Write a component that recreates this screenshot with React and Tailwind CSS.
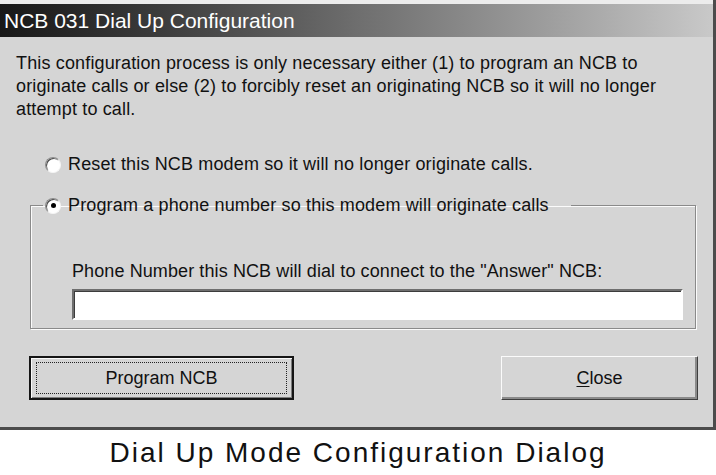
import React from 'react';

const Radio = ({ checked }) => (
  <span className="relative flex h-[16px] w-[16px] shrink-0 items-center justify-center rounded-full border border-t-[#8c8c8c] border-l-[#8c8c8c] border-r-[#f6f6f6] border-b-[#f6f6f6] bg-white shadow-[inset_1px_1px_0_#4a4a4a]">
    {checked && <span className="h-[5px] w-[5px] rounded-full bg-black" />}
  </span>
);

const App = () => {
  return (
    <div className="flex h-[475px] w-[716px] flex-col bg-white font-['Liberation_Sans',Arial,sans-serif] text-[#111]">
      {/* Dialog window */}
      <div className="flex h-[430px] w-full flex-col border-r-[3px] border-b-[3px] border-[#4c4c4c] bg-[#d5d5d5]">
        <div className="h-[4px] bg-[#ececec]" />
        <div className="flex h-[33px] items-center bg-linear-to-r from-[#181818] via-[#6e6e6e] to-[#c9c9c9] pl-[4px] text-[21px] text-white">
          NCB 031 Dial Up Configuration
        </div>

        <p className="mt-[15px] pl-[16px] text-[18px] leading-[23px] tracking-[0.15px]">
          This configuration process is only necessary either (1) to program an NCB to
          <br />
          originate calls or else (2) to forcibly reset an originating NCB so it will no longer
          <br />
          attempt to call.
        </p>

        <label className="mt-[32px] flex h-[23px] items-center gap-[7px] pl-[45px] text-[18px] tracking-[0.15px]">
          <Radio />
          <span>Reset this NCB modem so it will no longer originate calls.</span>
        </label>

        <fieldset className="mt-[18px] ml-[30px] w-[666px] border border-[#8a8a8a] pt-0 pr-0 pb-[8px] pl-[12px] shadow-[inset_1px_1px_0_#fbfbfb,1px_1px_0_#fbfbfb]">
          <legend className="flex h-[23px] w-[528px] items-center gap-[7px] pl-[2px] text-[18px] tracking-[0.15px]">
            <Radio checked />
            <span>Program a phone number so this modem will originate calls</span>
          </legend>
          <div className="mt-[43px] ml-[29px] flex flex-col">
            <span className="h-[23px] text-[18px] leading-[23px] tracking-[0.1px]">
              Phone Number this NCB will dial to connect to the "Answer" NCB:
            </span>
            <input
              type="text"
              className="mt-[6px] h-[31px] w-[611px] border-2 border-t-[#6e6e6e] border-l-[#6e6e6e] border-r-white border-b-white bg-white shadow-[inset_1px_1px_0_#3c3c3c] outline-none"
            />
          </div>
        </fieldset>

        <div className="mt-[27px] flex items-center justify-between pl-[29px] pr-[15px]">
          <button className="h-[44px] w-[265px] border-2 border-[#151515] bg-[#d5d5d5] p-0 shadow-[inset_1px_1px_0_#fafafa,inset_-1px_-1px_0_#7c7c7c]">
            <span className="mx-[5px] flex h-[32px] items-center justify-center border border-dotted border-[#222] text-[18px]">
              Program NCB
            </span>
          </button>
          <button className="flex h-[44px] w-[197px] items-center justify-center border border-t-[#fbfbfb] border-l-[#fbfbfb] border-r-[#3e3e3e] border-b-[#3e3e3e] bg-[#d5d5d5] text-[18px] shadow-[inset_-2px_-2px_0_#8a8a8a]">
            <span className="underline underline-offset-2">C</span>lose
          </button>
        </div>
      </div>

      {/* Caption */}
      <div className="flex h-[45px] items-center justify-center text-[28px] leading-[45px] tracking-[2px] text-[#111]">
        Dial Up Mode Configuration Dialog
      </div>
    </div>
  );
};

export default App;
